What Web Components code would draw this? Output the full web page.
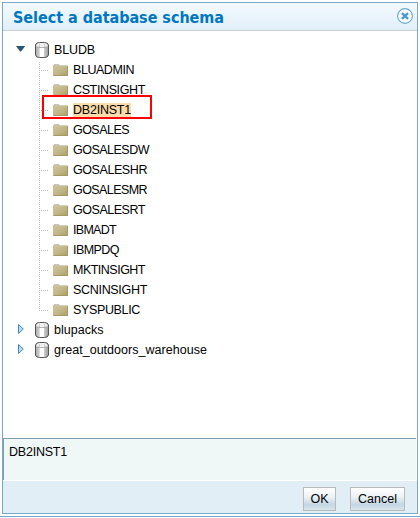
<!DOCTYPE html>
<html lang="en"><head><meta charset="utf-8"><title>Select a database schema</title>
<style>
html,body{margin:0;height:100%}
body{background:#fff;font:12.5px "Liberation Sans",Arial,sans-serif;color:#000;overflow:hidden}
</style></head><body>
<schema-dialog></schema-dialog>
<script>
// Label that spreads its letters over a given width.
class FitText extends HTMLElement{
  connectedCallback(){
    const r=this.attachShadow({mode:'open'});
    r.innerHTML='<style>:host{display:inline-block;white-space:nowrap}span{display:inline-block}</style><span></span>';
    const s=r.querySelector('span'),t=this.getAttribute('text');
    s.textContent=t;
    const w=+this.getAttribute('w');
    if(w) s.style.letterSpacing=((w-s.getBoundingClientRect().width)/t.length)+'px';
  }
}
customElements.define('fit-text',FitText);

class DbIcon extends HTMLElement{
  connectedCallback(){
    this.attachShadow({mode:'open'}).innerHTML=`<style>:host{display:block;width:14px;height:16px}svg{display:block}</style>
<svg width="14" height="16" viewBox="0 0 14 16"><defs><linearGradient id="g"><stop offset="0" stop-color="#aaa"/><stop offset=".3" stop-color="#d2d2d2"/><stop offset=".34" stop-color="#fff"/><stop offset=".62" stop-color="#fff"/><stop offset=".66" stop-color="#d0d0d0"/><stop offset="1" stop-color="#999"/></linearGradient></defs>
<path d="M.5 3Q1 .5 4.500 .5h5q3.500 0 4 2.500v10q-.5 2.500-4 2.500h-5q-3.500 0-4-2.500z" fill="url(#g)" stroke="#555"/>
<path d="M1.200 4.500Q1.500 1.200 4.500 1.200h5q3 0 3.300 3.300z" fill="#f0f0f0"/><path d="M1.500 4.500Q2 5.500 4 5.500h6q2 0 2.500-1" fill="none" stroke="#aaa" stroke-width=".9"/><path d="M4.500 2v3M9.500 2v3" stroke="#d0d0d0"/></svg>`;
  }
}
customElements.define('db-icon',DbIcon);

class FolderIcon extends HTMLElement{
  connectedCallback(){
    this.attachShadow({mode:'open'}).innerHTML=`<style>:host{display:block;width:15px;height:12px}svg{display:block}</style>
<svg width="15" height="12" viewBox="0 0 15 12"><defs><linearGradient id="f" x2="1" y2="1"><stop offset="0" stop-color="#cec69f"/><stop offset=".55" stop-color="#c0b585"/><stop offset="1" stop-color="#ab9b60"/></linearGradient></defs>
<path d="M0 2L1.500 0h4L7 1.500z" fill="#b9b5a2"/><path d="M2 .7h3.500V1.500H2z" fill="#eee"/><path d="M0 1.500h14.500l.5.500V12H.5L0 11.500z" fill="url(#f)"/><path d="M.5 11.500h14V2" fill="none" stroke="#a49a68"/><path d="M.5 2h13.500M.5 2V11" fill="none" stroke="#c6bf9c"/></svg>`;
  }
}
customElements.define('folder-icon',FolderIcon);

class DbRow extends HTMLElement{
  connectedCallback(){
    const open=this.hasAttribute('open');
    this.attachShadow({mode:'open'}).innerHTML=`<style>
:host{display:grid;grid-template-columns:19px 19px auto;align-items:center;height:20px;justify-content:start;padding-left:13px}
svg{display:block}</style>
${open?'<svg width="19" height="16"><path d="M0 4H9.200L5.100 9.500H4.100z" fill="#285570"/></svg>'
:'<svg width="19" height="16"><path d="M2.500 2.500v9L7.300 7z" fill="#b5dcf4" stroke="#4a86ab"/></svg>'}
<db-icon></db-icon><slot></slot>`;
  }
}
customElements.define('db-row',DbRow);

class FolderRow extends HTMLElement{
  connectedCallback(){
    this.attachShadow({mode:'open'}).innerHTML=`<style>
:host{display:grid;grid-template-columns:14px 20px auto;align-items:center;height:20px;justify-content:start;padding-left:36px}
svg{display:block}.label{line-height:14px;height:14px}
:host([selected]) .label{background:#fbdcab;height:15px;line-height:15px}
:host([selected]){position:relative}
:host([selected])::after{content:"";position:absolute;left:39px;top:-5px;width:106px;height:20px;border:2px solid #f00}</style>
<svg width="14" height="20"><path d="M.5 ${this.hasAttribute('first')?2:0}V${this.hasAttribute('last')?11:20}M0 10.500H9" fill="none" stroke="#b8b8b8" stroke-dasharray="1 1"/></svg>
<folder-icon></folder-icon><div class="label"><slot></slot></div>`;
  }
}
customElements.define('folder-row',FolderRow);

class PushButton extends HTMLElement{
  connectedCallback(){
    this.attachShadow({mode:'open'}).innerHTML=`<style>:host{display:flex;box-sizing:border-box;height:24px;border:1px solid #bababa;background:linear-gradient(#fff,#edf2f6 40%,#c5d8e5 75%,#d8e5ed);align-items:center;justify-content:center}</style><slot></slot>`;
  }
}
customElements.define('push-button',PushButton);

class SchemaDialog extends HTMLElement{
  connectedCallback(){
    const folders=[['BLUADMIN',61],['CSTINSIGHT',72],['DB2INST1',58],['GOSALES',56],['GOSALESDW',76],['GOSALESHR',74],['GOSALESMR',74],['GOSALESRT',72],['IBMADT',43],['IBMPDQ',46],['MKTINSIGHT',72],['SCNINSIGHT',74],['SYSPUBLIC',67]];
    this.attachShadow({mode:'open'}).innerHTML=`<style>
:host{display:flex;flex-direction:column;box-sizing:border-box;height:517px;padding:2px;border-bottom:1px solid #70a8ce}
.dialog{display:grid;grid-template-rows:28px 1fr 42px 33px;flex:1;box-sizing:border-box;border:1px solid #78a8cc;background:#fff}
header{display:flex;justify-content:space-between;box-sizing:border-box;border-bottom:1px solid #ccd0d3;background:linear-gradient(#f4faff,#e1eff9);padding:0 4px 0 10px;align-items:flex-start}
h1{margin:2px 0 0;font:bold 16px "DejaVu Sans Condensed","DejaVu Sans",sans-serif;font-stretch:condensed;line-height:26px;color:#0077c0}
header svg{margin-top:5px}
main{padding-top:9px}
.value{box-sizing:border-box;border:solid #809fb0;border-width:1px 0 0 1px;background:#eff8f7;padding:5px 0 0 5px;line-height:16px;margin-right:1px}
footer{display:flex;justify-content:flex-end;gap:14px;box-sizing:border-box;border-top:1px solid #fff;background:#e1eef6;padding:6px 12px 0 0}
</style><div class="dialog">
<header><h1><fit-text text="Select a database schema" w="211"></fit-text></h1>
<svg width="16" height="16"><circle cx="8" cy="8" r="7.400" fill="#f8fcff" stroke="#67a9d3" stroke-width="1.100"/><path d="M5 5.200L11 10.800M11 5.200L5 10.800" stroke="#4b99ca" stroke-width="2.400"/></svg></header>
<main><db-row open><fit-text text="BLUDB" w="41"></fit-text></db-row>
${folders.map((f,i)=>`<folder-row ${i==0?'first':''} ${i==2?'selected':''} ${i==12?'last':''}><fit-text text="${f[0]}" w="${f[1]}"></fit-text></folder-row>`).join('')}
<db-row><fit-text text="blupacks" w="49.5"></fit-text></db-row><db-row><fit-text text="great_outdoors_warehouse" w="153"></fit-text></db-row></main>
<div class="value"><fit-text text="DB2INST1" w="58"></fit-text></div>
<footer><push-button style="width:33px"><fit-text text="OK" w="18"></fit-text></push-button><push-button style="width:55px"><fit-text text="Cancel" w="39"></fit-text></push-button></footer></div>`;
  }
}
customElements.define('schema-dialog',SchemaDialog);
</script></body></html>
